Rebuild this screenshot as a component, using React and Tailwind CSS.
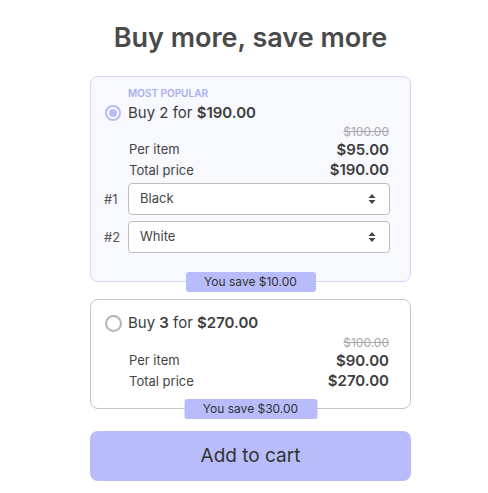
import React from "react";

const font = { fontFamily: "Inter, 'Noto Sans', sans-serif" };

function Arrows() {
  return (
    <svg width="8" height="12" viewBox="0 0 8 12" className="block">
      <path d="M4 1 L7.5 5 L0.5 5 Z" fill="#444" />
      <path d="M4 11 L7.5 7 L0.5 7 Z" fill="#444" />
    </svg>
  );
}

function Select({ label, value }) {
  return (
    <div className="flex items-center">
      <div className="w-[24px] -ml-[1px] text-[13px] leading-[20px] text-[#555]">{label}</div>
      <div className="flex-1 h-[32px] -mr-[1px] rounded-[4px] border border-[#bdbdbd] bg-white flex items-center justify-between pl-[11px] pr-[13px]">
        <span className="text-[13px] text-[#444]">{value}</span>
        <Arrows />
      </div>
    </div>
  );
}

function Radio({ checked }) {
  if (checked) {
    return (
      <div className="w-[16px] h-[16px] rounded-full bg-[#b7bbf8] flex items-center justify-center">
        <div className="w-[12px] h-[12px] rounded-full bg-white flex items-center justify-center">
          <div className="w-[8px] h-[8px] rounded-full bg-[#b7bbf8]" />
        </div>
      </div>
    );
  }
  return <div className="w-[17px] h-[17px] rounded-full border-2 border-[#b5b5b5] bg-white" />;
}

function Prices({ per, total, top }) {
  return (
    <div className={`pl-[24px] ${top}`}>
      <div className="flex justify-end text-[12px] leading-[12px] text-[#a8a8a8] line-through">$100.00</div>
      <div className="mt-[2px] flex justify-between items-center h-[20px]">
        <span className="text-[13px] text-[#444]">Per item</span>
        <span className="text-[15px] font-semibold text-[#3d3d3d]">{per}</span>
      </div>
      <div className="flex justify-between items-center h-[21px]">
        <span className="text-[13px] text-[#444]">Total price</span>
        <span className="text-[15px] font-semibold text-[#3d3d3d]">{total}</span>
      </div>
    </div>
  );
}

function Badge({ children, w }) {
  return (
    <div
      className={`absolute left-1/2 -translate-x-1/2 bottom-[-11px] h-[20px] rounded-[3px] bg-[#b8bcfa] flex items-center justify-center text-[12px] text-[#333] ${w}`}
    >
      {children}
    </div>
  );
}

export default function App() {
  return (
    <div className="w-[488px] h-[493px] bg-white pt-[22px]" style={font}>
      <div className="w-[321px] ml-[90px] flex flex-col">
        <h1 className="text-center text-[27px] leading-[32px] font-semibold text-[#4a4a4a]">
          Buy more, save more
        </h1>
        <div className="relative mt-[22px] rounded-[8px] border border-[#d3d5fb] bg-[#f8f8ff] pt-[9px] pb-[28px] pl-[14px] pr-[21px]">
          <div className="pl-[23px] text-[10px] leading-[14px] font-semibold text-[#a9adf5] uppercase">
            Most popular
          </div>
          <div className="mt-[1px] flex items-center h-[24px]">
            <Radio checked />
            <span className="ml-[7px] text-[15px] text-[#3d3d3d]">
              Buy 2 for <span className="font-semibold">$190.00</span>
            </span>
          </div>
          <Prices per="$95.00" total="$190.00" top="mt-[1px]" />
          <div className="mt-[2px] flex flex-col gap-[6px]">
            <Select label="#1" value="Black" />
            <Select label="#2" value="White" />
          </div>
          <Badge w="w-[130px]">You save $10.00</Badge>
        </div>

        <div className="relative mt-[17px] rounded-[8px] border border-[#c4c4c4] bg-white pt-[11px] pb-[16px] pl-[14px] pr-[21px]">
          <div className="flex items-center h-[24px]">
            <Radio />
            <span className="ml-[6px] text-[15px] text-[#3d3d3d]">
              Buy <span className="font-semibold">3</span> for <span className="font-semibold">$270.00</span>
            </span>
          </div>
          <Prices per="$90.00" total="$270.00" top="mt-[2px]" />
          <Badge w="w-[133px]">You save $30.00</Badge>
        </div>

        <button className="mt-[22px] h-[50px] w-full rounded-[8px] bg-[#b8bcfa] text-[19px] text-[#333]">
          Add to cart
        </button>
      </div>
    </div>
  );
}
